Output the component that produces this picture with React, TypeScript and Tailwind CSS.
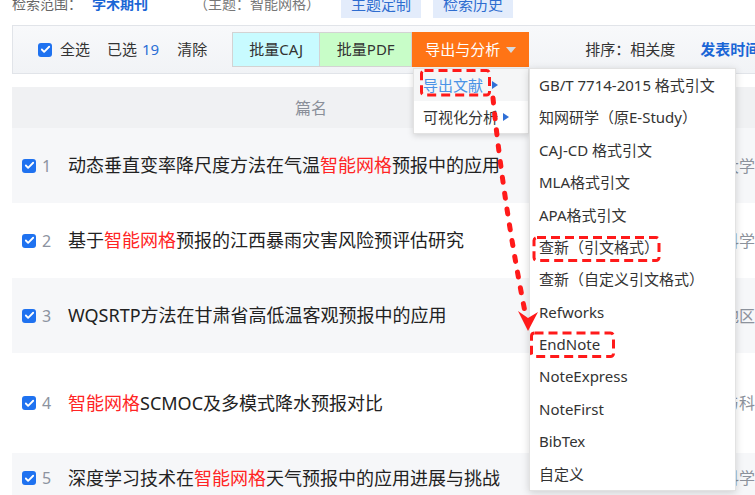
import { Check } from "lucide-react";

const FONT = "font-['Noto_Sans','Noto_Sans_CJK_SC',sans-serif]";

type Part = [string, boolean];

const ROWS: { no: number; parts: Part[]; src: string; h: string; gray: boolean }[] = [
  {
    no: 1,
    parts: [
      ["动态垂直变率降尺度方法在气温", false],
      ["智能网格", true],
      ["预报中的应用", false],
    ],
    src: "南京大学学报",
    h: "h-[75px]",
    gray: true,
  },
  {
    no: 2,
    parts: [
      ["基于", false],
      ["智能网格", true],
      ["预报的江西暴雨灾害风险预评估研究", false],
    ],
    src: "气象科学",
    h: "h-[75px]",
    gray: false,
  },
  {
    no: 3,
    parts: [["WQSRTP方法在甘肃省高低温客观预报中的应用", false]],
    src: "干旱地区农业研究",
    h: "h-[75px]",
    gray: true,
  },
  {
    no: 4,
    parts: [
      ["智能网格", true],
      ["SCMOC及多模式降水预报对比", false],
    ],
    src: "气象与科技",
    h: "h-[100px]",
    gray: false,
  },
  {
    no: 5,
    parts: [
      ["深度学习技术在", false],
      ["智能网格", true],
      ["天气预报中的应用进展与挑战", false],
    ],
    src: "大气科学",
    h: "h-[50px]",
    gray: true,
  },
];

const EXPORTS = [
  "GB/T 7714-2015 格式引文",
  "知网研学（原E-Study）",
  "CAJ-CD 格式引文",
  "MLA格式引文",
  "APA格式引文",
  "查新（引文格式）",
  "查新（自定义引文格式）",
  "Refworks",
  "EndNote",
  "NoteExpress",
  "NoteFirst",
  "BibTex",
  "自定义",
];

function Box() {
  return (
    <span className="flex h-[14px] w-[14px] shrink-0 items-center justify-center rounded-[3px] bg-[#1f72f0]">
      <Check size={11} strokeWidth={4} color="#fff" />
    </span>
  );
}

export default function App() {
  return (
    <div className={`relative h-[495px] w-[755px] overflow-hidden bg-white text-[#333] ${FONT}`}>
      {/* search scope strip, cut at the top */}
      <div className="flex h-[18px] items-start overflow-hidden pl-3 text-[14px]">
        <div className="-mt-[7px] flex items-center">
          <span className="text-[#666]">检索范围：</span>
          <span className="ml-[10px] font-bold text-[#1a66d6]">学术期刊</span>
          <span className="ml-[46px] text-[#777]">（主题：智能网格）</span>
        </div>
        <span className="ml-[21px] flex h-[18px] w-[80px] items-end justify-center bg-[#e3ecfb] text-[15px] text-[#2e6dd0]">
          <span className="mb-[4px] leading-[20px]">主题定制</span>
        </span>
        <span className="ml-[12px] flex h-[18px] w-[80px] items-end justify-center bg-[#e3ecfb] text-[15px] text-[#2e6dd0]">
          <span className="mb-[4px] leading-[20px]">检索历史</span>
        </span>
      </div>

      {/* toolbar */}
      <div className="ml-3 mt-[7px] flex h-[49px] w-[760px] items-center border border-r-0 border-[#e1e4e9] bg-gradient-to-b from-[#f8f9fb] to-[#f1f3f6] text-[15px]">
        <span className="ml-[25px]">
          <Box />
        </span>
        <span className="ml-2">全选</span>
        <span className="ml-[17px]">已选</span>
        <span className="ml-[5px] text-[#2b6fd6]">19</span>
        <span className="ml-[18px]">清除</span>
        <span className="ml-[25px] flex h-[35px] w-[88px] items-center justify-center border border-[#d3d3d3] bg-[#c8fbff]">
          批量CAJ
        </span>
        <span className="flex h-[35px] w-[92px] items-center justify-center border border-l-0 border-[#d3d3d3] bg-[#c8fdc8]">
          批量PDF
        </span>
        <span className="flex h-[35px] w-[117px] items-center justify-center gap-[6px] bg-[#ff7415] text-white">
          导出与分析
          <svg width="10" height="6" viewBox="0 0 10 6">
            <path d="M0 0 L10 0 L5 6 Z" fill="#d7d9dc" />
          </svg>
        </span>
        <span className="ml-[56px]">排序：相关度</span>
        <span className="ml-[25px] whitespace-nowrap font-bold text-[#1a66d6]">发表时间</span>
      </div>

      {/* table */}
      <div className="ml-3 mt-[13px]">
        <div className="flex h-[41px] items-center bg-[#f0f1f3] pl-[283px] text-[16px] text-[#8a8f99]">篇名</div>
        {ROWS.map((r) => (
          <div
            key={r.no}
            className={`flex items-center whitespace-nowrap ${r.h} ${r.gray ? "bg-[#f6f7f9]" : "bg-white"}`}
          >
            <span className="ml-[10px] shrink-0">
              <Box />
            </span>
            <span className="ml-[6px] w-[26px] shrink-0 text-[16px] text-[#8c93a0]">{r.no}</span>
            <span className="w-[623px] shrink-0 text-[18px] text-[#222]">
              {r.parts.map(([t, hl], i) => (
                <span key={i} className={hl ? "text-[#ff2424]" : ""}>
                  {t}
                </span>
              ))}
            </span>
            <span className="shrink-0 text-[16px] text-[#8c929c]">{r.src}</span>
          </div>
        ))}
      </div>

      {/* first level menu */}
      <div className="absolute left-[413px] top-[68px] w-[116px] border border-[#e2e2e2] bg-white text-[15px] shadow-[0_2px_6px_rgba(0,0,0,0.15)]">
        <div className="flex h-[32px] items-center bg-[#f5f6f7] pl-[9px] text-[#4a93e6]">
          导出文献
          <svg className="ml-[9px]" width="6" height="8" viewBox="0 0 6 8">
            <path d="M0 0 L6 4 L0 8 Z" fill="#2f6fd6" />
          </svg>
        </div>
        <div className="flex h-[32px] items-center pl-[9px]">
          可视化分析
          <svg className="ml-[5px]" width="6" height="8" viewBox="0 0 6 8">
            <path d="M0 0 L6 4 L0 8 Z" fill="#2f6fd6" />
          </svg>
        </div>
      </div>

      {/* export submenu */}
      <div className="absolute left-[529px] top-[68px] w-[207px] border border-[#e2e2e2] bg-white text-[15px] text-[#333] shadow-[0_2px_8px_rgba(0,0,0,0.16)]">
        {EXPORTS.map((t) => (
          <div key={t} className="flex h-[32.4px] items-center whitespace-nowrap pl-[9px]">
            {t}
          </div>
        ))}
      </div>

      {/* red annotation marks */}
      <svg className="pointer-events-none absolute left-0 top-0" width="755" height="495">
        <g fill="none" stroke="#ff1a1a" strokeWidth="3" strokeDasharray="9 5">
          <rect x="421.5" y="70.5" width="68" height="24.5" rx="3" />
          <rect x="534" y="237.5" width="125" height="23" rx="3" />
          <rect x="531.5" y="333" width="82" height="23.5" rx="3" />
        </g>
        <path
          d="M493 98 Q503 200 525 312"
          fill="none"
          stroke="#ff1a1a"
          strokeWidth="5"
          strokeLinecap="round"
          strokeDasharray="5 11"
        />
        <path d="M518 311 L528 318 L538 312 L528 331 Z" fill="#ff1a1a" />
      </svg>
    </div>
  );
}
